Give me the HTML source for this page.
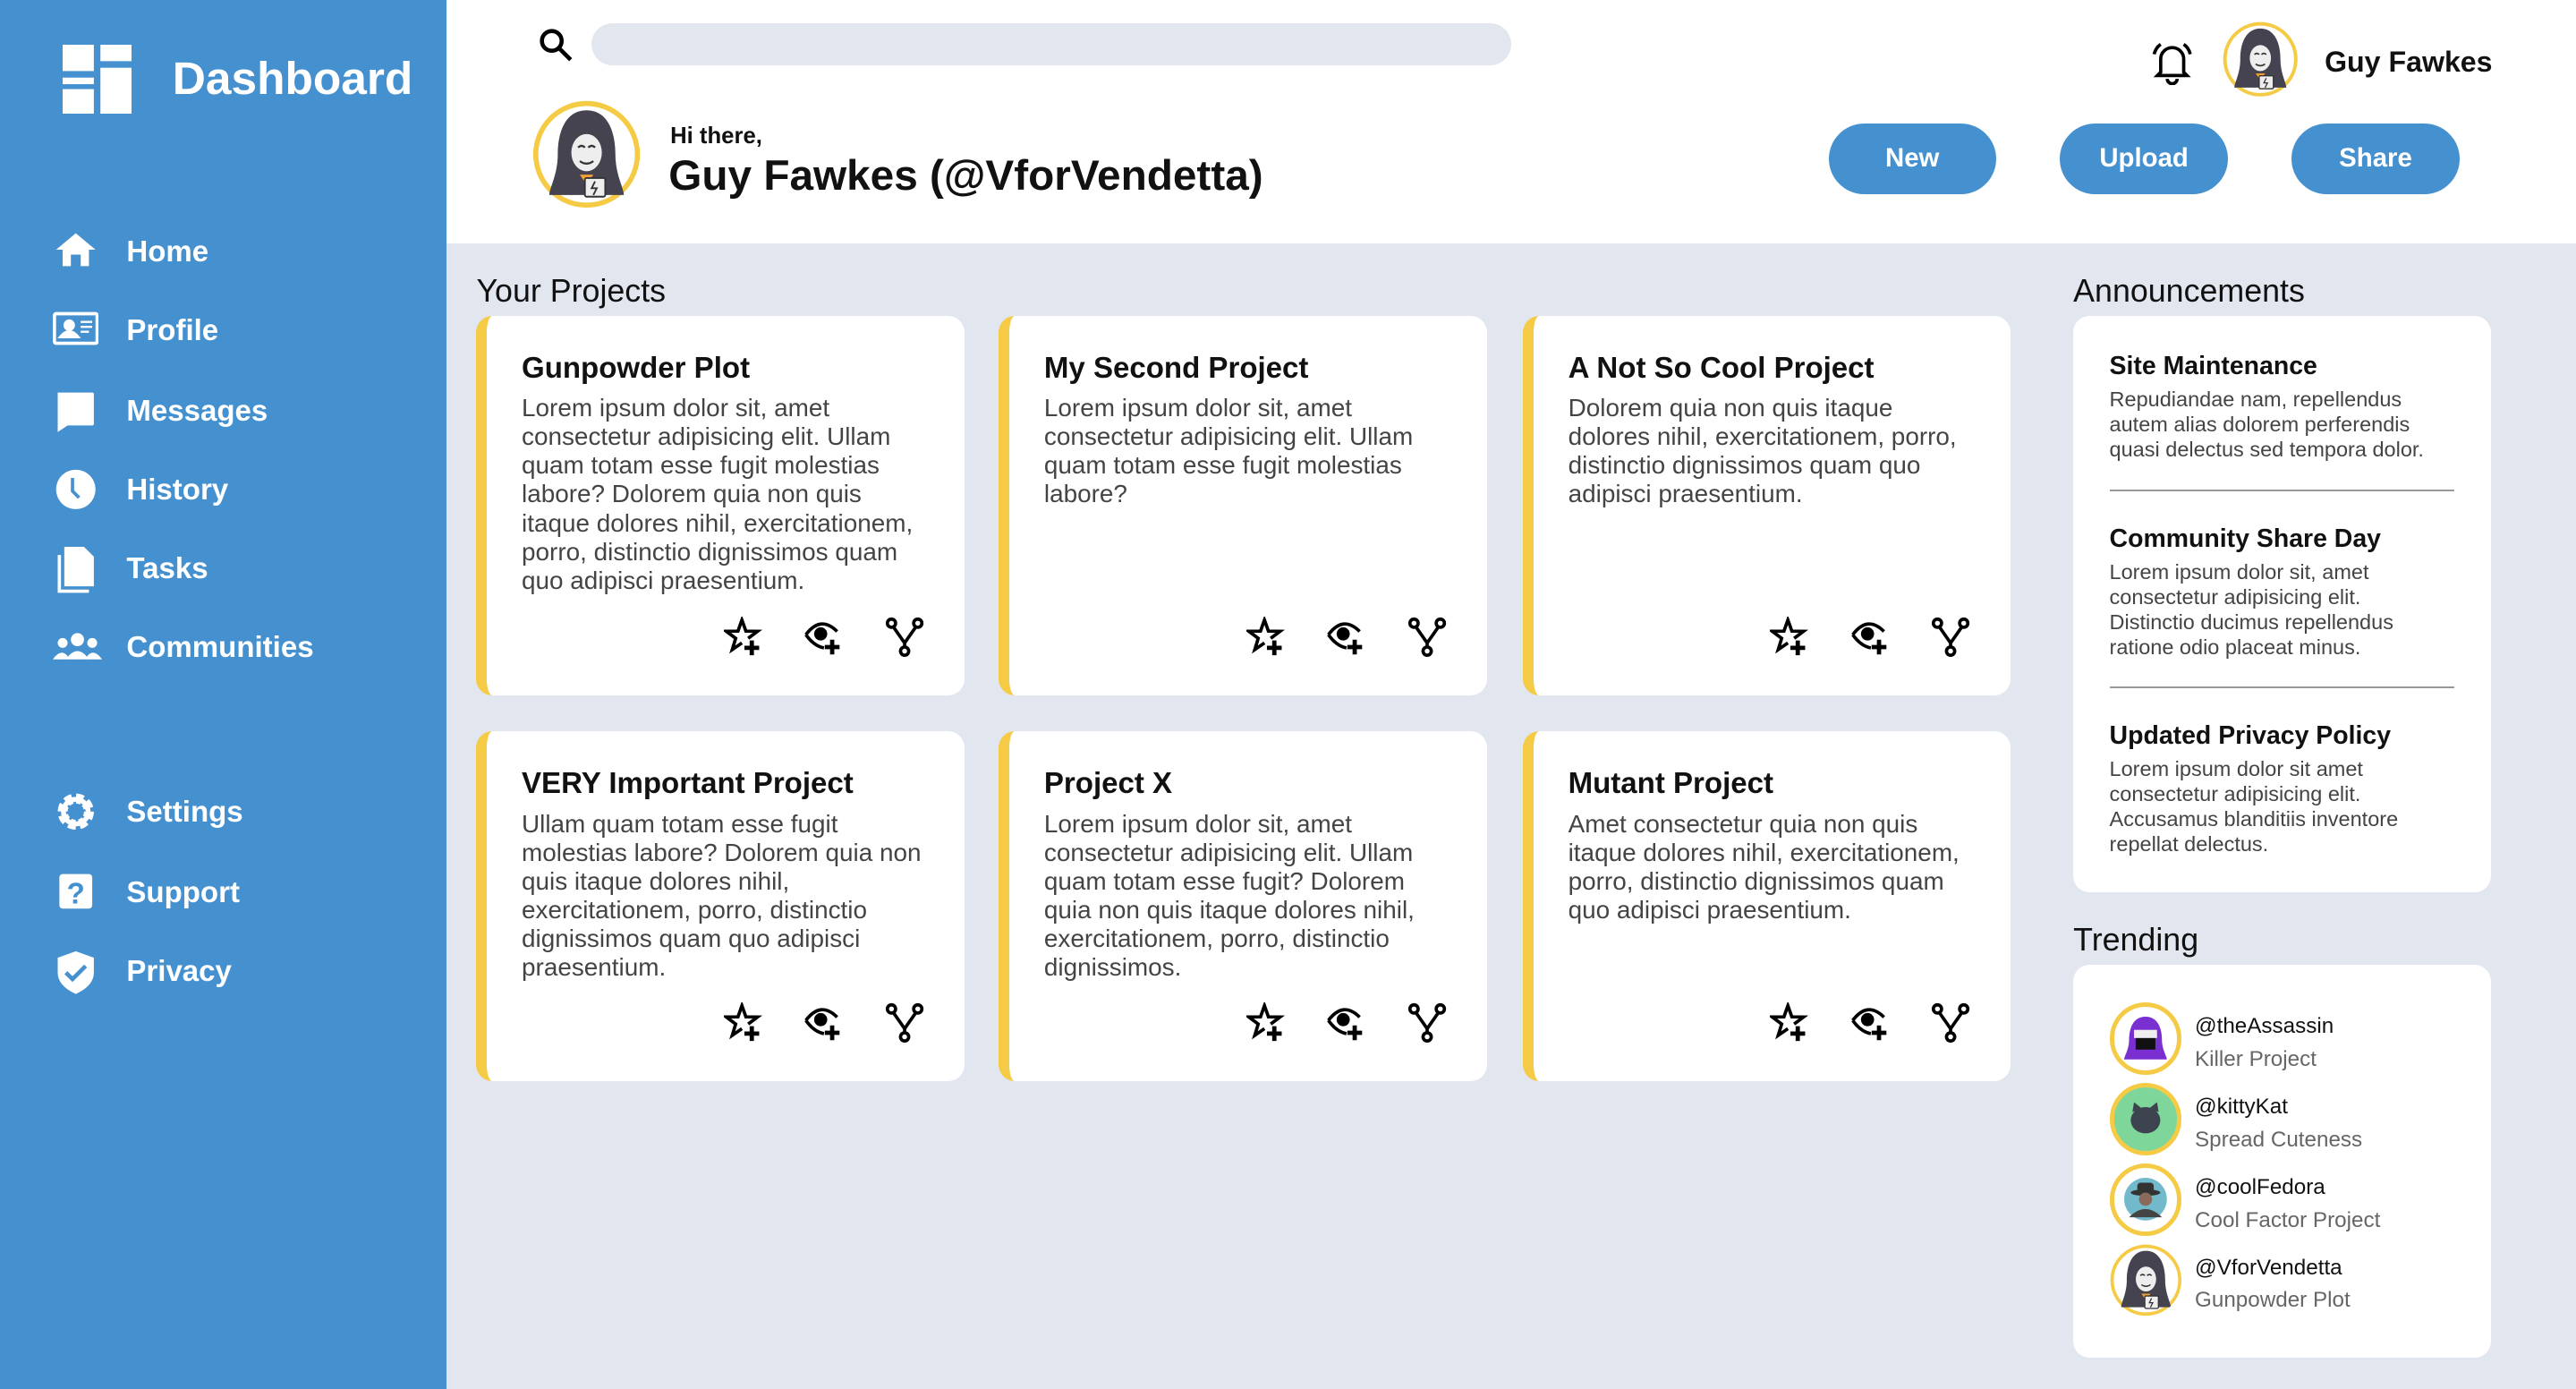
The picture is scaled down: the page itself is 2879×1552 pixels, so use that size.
<!DOCTYPE html>
<html><head><meta charset="utf-8"><style>
html{zoom:1.8361}
*{box-sizing:border-box;margin:0;padding:0}
body{width:1568px;height:845px;overflow:hidden;background:#e2e7ef;font-family:"Liberation Sans",Arial,sans-serif;position:relative}
.abs{position:absolute}
#side{left:0;top:0;width:272px;height:845px;background:#4591d0}
.nav{position:absolute;left:0;width:272px;height:30px;color:#fff;font-weight:bold;font-size:18px}
.nav svg{position:absolute;left:32px;top:3px}
.nav span{position:absolute;left:77px;top:6px}
#top{left:272px;top:0;width:1296px;height:148px;background:#fff}
.btn{position:absolute;top:75px;width:102px;height:43px;border-radius:22px;background:#4591d0;color:#fff;font-weight:bold;font-size:16px;text-align:center;line-height:43px}
.card{position:absolute;width:297px;background:#fff;border-radius:10px;border-left:7px solid #f5cb45;padding:22px 20px 0 21px}
.card h3{font-size:18px;margin-bottom:5px;color:#111}
.card p{font-size:15.2px;line-height:17.5px;color:#444}
.icons{position:absolute;left:144px;width:130px;height:26px}
.icons svg{position:absolute;top:0}
.panel{position:absolute;left:1262px;width:254px;background:#fff;border-radius:10px}
.ann h4{font-size:15.5px;color:#111;margin-bottom:4px}
.ann p{font-size:12.8px;line-height:15.2px;color:#444}
.tr{position:absolute;left:22px;height:46px;width:230px}
.tr .av{position:absolute;left:0;top:0;width:44px;height:44px;border-radius:50%;border:3px solid #f5cb45;background:#fff;overflow:hidden}
.tr .n{position:absolute;left:52px;top:7px;font-size:13.2px;color:#111}
.tr .s{position:absolute;left:52px;top:27px;font-size:13.2px;color:#666}
</style></head><body>
<div id="side" class="abs">
 <svg class="abs" style="left:38px;top:27px" width="42" height="42" viewBox="0 0 42 42" fill="#fff"><rect x="0" y="0" width="19" height="16"/><rect x="0" y="20" width="19" height="4"/><rect x="0" y="27" width="19" height="15"/><rect x="23" y="0" width="19" height="10"/><rect x="23" y="14" width="19" height="28"/></svg>
 <div class="abs" style="left:105px;top:31px;color:#fff;font-size:28px;font-weight:bold">Dashboard</div>
 <div class="nav" style="top:137px"><svg width="28" height="24" viewBox="0 0 28 24" fill="#fff"><path d="M2 12 L14 2 L26 12 L22 12 L22 22 L17 22 L17 15 L11 15 L11 22 L6 22 L6 12Z"/></svg><span>Home</span></div>
 <div class="nav" style="top:185px"><svg width="28" height="24" viewBox="0 0 28 24" fill="none" stroke="#fff" stroke-width="2"><rect x="1" y="3" width="26" height="18" rx="1"/><circle cx="10" cy="10" r="2.5" fill="#fff"/><path d="M5 17 Q10 11 15 17Z" fill="#fff"/><path d="M17 8h7M17 11h7M17 14h5" stroke-width="1.3"/></svg><span>Profile</span></div>
 <div class="nav" style="top:234px"><svg width="28" height="26" viewBox="0 0 28 26" fill="#fff"><path d="M3 2h21a1 1 0 0 1 1 1v18a1 1 0 0 1-1 1H9l-6 4z"/></svg><span>Messages</span></div>
 <div class="nav" style="top:282px"><svg width="28" height="26" viewBox="0 0 28 26"><ellipse cx="14" cy="13" rx="12" ry="12" fill="#fff"/><path d="M12 6v8l4 4" stroke="#4591d0" stroke-width="2" fill="none"/></svg><span>History</span></div>
 <div class="nav" style="top:330px"><svg width="28" height="30" viewBox="0 0 28 30" fill="#fff"><path d="M7 0h12l6 6v18H7z"/><path d="M3 5v23h19v-2H5V5z"/></svg><span>Tasks</span></div>
 <div class="nav" style="top:378px"><svg width="30" height="24" viewBox="0 0 30 24" fill="#fff"><circle cx="15" cy="8" r="4"/><path d="M8 20q7-10 14 0z"/><circle cx="6" cy="10" r="3"/><circle cx="24" cy="10" r="3"/><path d="M0 20q5-7 9-2v2zM30 20q-5-7-9-2v2z"/></svg><span>Communities</span></div>
 <div class="nav" style="top:478px"><svg width="28" height="26" viewBox="0 0 28 26"><circle cx="14" cy="13" r="8" fill="none" stroke="#fff" stroke-width="6" stroke-dasharray="4 2.3"/><circle cx="14" cy="13" r="7.5" fill="none" stroke="#fff" stroke-width="3"/></svg><span>Settings</span></div>
 <div class="nav" style="top:527px"><svg width="28" height="26" viewBox="0 0 28 26"><rect x="4" y="2" width="20" height="21" rx="2" fill="#fff"/><text x="14" y="20" font-size="18" font-weight="bold" text-anchor="middle" fill="#4591d0" font-family="Liberation Sans">?</text></svg><span>Support</span></div>
 <div class="nav" style="top:575px"><svg width="28" height="28" viewBox="0 0 28 28"><path d="M14 1 L25 5 V14 Q25 22 14 27 Q3 22 3 14 V5Z" fill="#fff"/><path d="M8 14l4 4 8-8" stroke="#4591d0" stroke-width="2.5" fill="none"/></svg><span>Privacy</span></div>
</div>
<div id="top" class="abs">
 <svg class="abs" style="left:56px;top:17px" width="22" height="22" viewBox="0 0 22 22" fill="none" stroke="#000" stroke-width="2.5"><circle cx="8" cy="8" r="6"/><path d="M12.5 12.5l7 7"/></svg>
 <div class="abs" style="left:88px;top:14px;width:560px;height:26px;border-radius:13px;background:#e2e7ef"></div>
 <svg class="abs" style="left:1036px;top:24px" width="28" height="28" viewBox="0 0 28 28" fill="none" stroke="#000" stroke-width="2"><path d="M7 20V12a7 7 0 0 1 14 0v8l2 2H5z"/><path d="M11 24a3 3 0 0 0 6 0"/><path d="M3 9q1-4 4-6M25 9q-1-4-4-6"/></svg>
 <svg class="abs" style="left:1081px;top:13px" width="46" height="46" viewBox="0 0 64 64"><use href="#guy"/></svg>
 <div class="abs" style="left:1143px;top:28px;font-size:17.5px;font-weight:bold;color:#111">Guy Fawkes</div>
 <svg class="abs" style="left:52px;top:60px" width="66" height="68" viewBox="0 0 64 64"><defs><g id="guy"><circle cx="32" cy="32" r="30" fill="#fff" stroke="#f5cb45" stroke-width="3"/><path d="M32 6c-12 0-17 12-17 26 0 12-5 20-5 24h44c0-4-5-12-5-24 0-14-5-26-17-26z" fill="#45434f"/><ellipse cx="32" cy="31" rx="9" ry="11" fill="#eee"/><path d="M27 28q2-2 4 0M33 28q2-2 4 0M28 36q4 3 8 0" stroke="#333" fill="none" stroke-width="1.2"/><path d="M28 44l4 6 4-6z" fill="#f0a030"/><rect x="31" y="46" width="12" height="11" rx="1" fill="#eee" stroke="#333"/><path d="M37 48l-2 4h3l-2 4" stroke="#333" fill="none"/></g></defs><use href="#guy"/></svg>
 <div class="abs" style="left:136px;top:75px;font-size:14px;font-weight:bold;color:#111">Hi there,</div>
 <div class="abs" style="left:135px;top:92px;font-size:26px;font-weight:bold;color:#111">Guy Fawkes (@VforVendetta)</div>
 <div class="btn" style="left:841px">New</div>
 <div class="btn" style="left:982px">Upload</div>
 <div class="btn" style="left:1123px">Share</div>
</div>
<div class="abs" style="left:290px;top:166px;font-size:19.5px;color:#111">Your Projects</div>
<div class="abs" style="left:1262px;top:166px;font-size:19.5px;color:#111">Announcements</div>
<div class="abs" style="left:1262px;top:561px;font-size:19.5px;color:#111">Trending</div>

<svg width="0" height="0" style="position:absolute"><defs>
<g id="star" fill="none" stroke="#000" stroke-width="2" stroke-linejoin="miter"><path d="M14.8 13.2 L20.5 8.9 L13.4 8.8 L11 2 L8.6 8.8 L1.5 8.9 L7.2 13.2 L5.1 20.1 L11 16"/><path d="M17 14.5v9M12.5 19h9" stroke-width="2.6"/></g>
<g id="eye" fill="none" stroke="#000" stroke-width="2"><path d="M2 11q9-12 19-2M2 11q5 7 11 8"/><circle cx="11" cy="10.5" r="3" fill="#000"/><path d="M18 14v9M13.5 18.5h9" stroke-width="2.6"/></g>
<g id="fork" fill="none" stroke="#000" stroke-width="2"><circle cx="4" cy="4" r="2.5"/><circle cx="20" cy="4" r="2.5"/><circle cx="12" cy="21" r="2.5"/><path d="M5 6l7 10 7-10M12 16v3"/></g>
</defs></svg>

<div class="card" style="left:290px;top:192px;height:231px"><h3>Gunpowder Plot</h3><p>Lorem ipsum dolor sit, amet consectetur adipisicing elit. Ullam quam totam esse fugit molestias labore? Dolorem quia non quis itaque dolores nihil, exercitationem, porro, distinctio dignissimos quam quo adipisci praesentium.</p><div class="icons" style="top:183px"><svg style="left:0" width="26" height="26"><use href="#star"/></svg><svg style="left:48px" width="26" height="26"><use href="#eye"/></svg><svg style="left:98px" width="26" height="26"><use href="#fork"/></svg></div></div>
<div class="card" style="left:608px;top:192px;height:231px"><h3>My Second Project</h3><p>Lorem ipsum dolor sit, amet consectetur adipisicing elit. Ullam quam totam esse fugit molestias labore?</p><div class="icons" style="top:183px"><svg style="left:0" width="26" height="26"><use href="#star"/></svg><svg style="left:48px" width="26" height="26"><use href="#eye"/></svg><svg style="left:98px" width="26" height="26"><use href="#fork"/></svg></div></div>
<div class="card" style="left:927px;top:192px;height:231px"><h3>A Not So Cool Project</h3><p>Dolorem quia non quis itaque dolores nihil, exercitationem, porro, distinctio dignissimos quam quo adipisci praesentium.</p><div class="icons" style="top:183px"><svg style="left:0" width="26" height="26"><use href="#star"/></svg><svg style="left:48px" width="26" height="26"><use href="#eye"/></svg><svg style="left:98px" width="26" height="26"><use href="#fork"/></svg></div></div>
<div class="card" style="left:290px;top:445px;height:213px"><h3>VERY Important Project</h3><p>Ullam quam totam esse fugit molestias labore? Dolorem quia non quis itaque dolores nihil, exercitationem, porro, distinctio dignissimos quam quo adipisci praesentium.</p><div class="icons" style="top:165px"><svg style="left:0" width="26" height="26"><use href="#star"/></svg><svg style="left:48px" width="26" height="26"><use href="#eye"/></svg><svg style="left:98px" width="26" height="26"><use href="#fork"/></svg></div></div>
<div class="card" style="left:608px;top:445px;height:213px"><h3>Project X</h3><p>Lorem ipsum dolor sit, amet consectetur adipisicing elit. Ullam quam totam esse fugit? Dolorem quia non quis itaque dolores nihil, exercitationem, porro, distinctio dignissimos.</p><div class="icons" style="top:165px"><svg style="left:0" width="26" height="26"><use href="#star"/></svg><svg style="left:48px" width="26" height="26"><use href="#eye"/></svg><svg style="left:98px" width="26" height="26"><use href="#fork"/></svg></div></div>
<div class="card" style="left:927px;top:445px;height:213px"><h3>Mutant Project</h3><p>Amet consectetur quia non quis itaque dolores nihil, exercitationem, porro, distinctio dignissimos quam quo adipisci praesentium.</p><div class="icons" style="top:165px"><svg style="left:0" width="26" height="26"><use href="#star"/></svg><svg style="left:48px" width="26" height="26"><use href="#eye"/></svg><svg style="left:98px" width="26" height="26"><use href="#fork"/></svg></div></div>

<div class="panel ann" style="top:192px;height:351px">
 <div class="abs" style="left:22px;top:22px;width:215px"><h4>Site Maintenance</h4><p>Repudiandae nam, repellendus autem alias dolorem perferendis quasi delectus sed tempora dolor.</p></div>
 <div class="abs" style="left:22px;top:106px;width:210px;height:1px;background:#999"></div>
 <div class="abs" style="left:22px;top:127px;width:200px"><h4>Community Share Day</h4><p>Lorem ipsum dolor sit, amet consectetur adipisicing elit. Distinctio ducimus repellendus ratione odio placeat minus.</p></div>
 <div class="abs" style="left:22px;top:226px;width:210px;height:1px;background:#999"></div>
 <div class="abs" style="left:22px;top:247px;width:200px"><h4>Updated Privacy Policy</h4><p>Lorem ipsum dolor sit amet consectetur adipisicing elit. Accusamus blanditiis inventore repellat delectus.</p></div>
</div>
<div class="panel" style="top:587px;height:239px">
 <div class="tr" style="top:23px"><div class="av"><svg width="38" height="38" viewBox="0 0 38 38"><path d="M19 6c-8 0-10 8-10 14 0 6-3 10-3 12h26c0-2-3-6-3-12 0-6-2-14-10-14z" fill="#7a2fd0"/><rect x="12" y="14" width="14" height="5" fill="#eee"/><rect x="13" y="19" width="12" height="7" fill="#111"/></svg></div><div class="n">@theAssassin</div><div class="s">Killer Project</div></div>
 <div class="tr" style="top:72px"><div class="av" style="background:#7fd69a"><svg width="38" height="38" viewBox="0 0 38 38"><ellipse cx="19" cy="20" rx="9" ry="8" fill="#3d4450"/><path d="M11 15l1-6 5 4zM27 15l-1-6-5 4z" fill="#3d4450"/></svg></div><div class="n">@kittyKat</div><div class="s">Spread Cuteness</div></div>
 <div class="tr" style="top:121px"><div class="av"><svg width="38" height="38" viewBox="0 0 38 38"><circle cx="19" cy="19" r="13" fill="#72b9cc"/><ellipse cx="19" cy="15" rx="9" ry="2" fill="#333"/><rect x="14" y="9" width="10" height="6" rx="2" fill="#333"/><circle cx="19" cy="19" r="4" fill="#8a6a5a"/><path d="M9 30q10-10 20 0z" fill="#444"/></svg></div><div class="n">@coolFedora</div><div class="s">Cool Factor Project</div></div>
 <div class="tr" style="top:170px"><div class="av" style="border:none"><svg width="44" height="44" viewBox="0 0 64 64"><use href="#guy"/></svg></div><div class="n">@VforVendetta</div><div class="s">Gunpowder Plot</div></div>
</div>
</body></html>
